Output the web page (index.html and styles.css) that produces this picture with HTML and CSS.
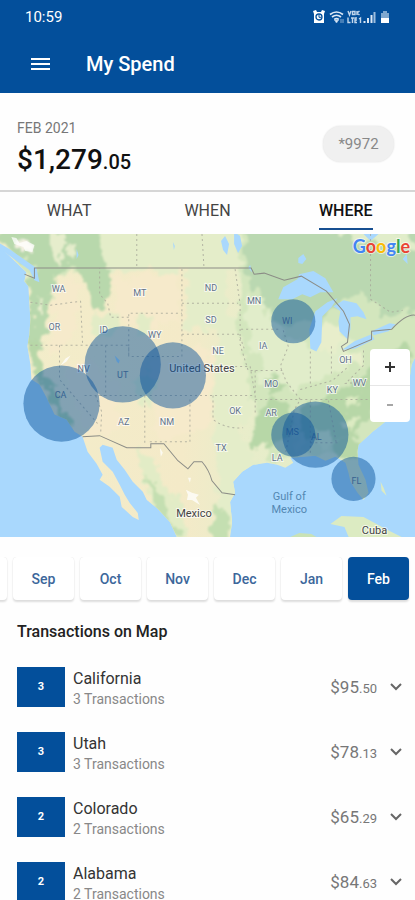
FILE: index.html
```html
<!DOCTYPE html>
<html lang="en">
<head>
<meta charset="utf-8">
<meta name="viewport" content="width=device-width, initial-scale=1">
<title>My Spend</title>
<link rel="stylesheet" href="styles.css">
</head>
<body>
<header class="top">
  <div class="status">
    <span>10:59</span>
    <svg class="status-icons" viewBox="0 0 80 16" width="80" height="16" aria-hidden="true">
      <path d="M1 2l3-1 1 2h4l1-2 3 1-1 3v9H2V5z" fill="#fff"/>
      <circle cx="7" cy="8" r="3" fill="#fff" stroke="#034f9b" stroke-width="1.3"/>
      <path d="M7 6v2.300h2" fill="none" stroke="#034f9b"/>
      <path d="M18 5.500q6.500-5 13 0M20 8q4.500-3.500 9 0M22.200 10.500q2.300-1.600 4.600 0" fill="none" stroke="#dce8f5" stroke-width="1.700"/>
      <path d="M24.500 14l-2-3h4zM29 10v4m2-4v4" fill="#dce8f5" stroke="#a9c5e2" stroke-width=".8"/>
      <g fill="none" stroke="#c3d7ec" stroke-width="1.400">
        <path d="M36 2l1.500 4L39 2M40.500 2.500h2.500v3h-2.500zM45 2v4m0-2l2.500-2M45 4l2.500 2"/>
        <path d="M36 8.500v5h2.500M39 9h3m-1.500 0v5M45 9h-2v4.500h2M43 11h2M47 10l1.500-1v5"/>
      </g>
      <path d="M51.500 12h2v2h-2zM55 9h2v5h-2zM58.500 6h2v8h-2z" fill="#dce8f5"/>
      <path d="M61.500 3h2v11h-2z" fill="#9dbddd"/>
      <path d="M69 4h2V2h4v2h2v6h-8z" fill="#7fa8d0"/>
      <path d="M69 9h8v5h-8z" fill="#fff"/>
    </svg>
  </div>
  <div class="bar">
    <button class="menu" type="button" aria-label="Menu">
      <svg viewBox="0 0 20 14" width="20" height="14"><path d="M0 2h19M0 7h19M0 12h19" stroke="#fff" stroke-width="2"/></svg>
    </button>
    <h1>My Spend</h1>
  </div>
</header>
<main>
  <section class="summary">
    <div>
      <p class="period">FEB 2021</p>
      <p class="total">$1,279<small>.05</small></p>
    </div>
    <button class="card" type="button">*9972</button>
  </section>
  <nav class="tabs">
    <a href="#what">WHAT</a>
    <a href="#when">WHEN</a>
    <a href="#where" class="current" aria-current="page">WHERE</a>
  </nav>
  <section class="map" aria-label="Spending map">
    <svg class="map-art" viewBox="0 0 415 302" preserveAspectRatio="xMidYMid slice">
      <defs>
        <filter id="rough" x="-5%" y="-5%" width="110%" height="110%">
          <feTurbulence type="fractalNoise" baseFrequency=".09" numOctaves="3" seed="4"/>
          <feDisplacementMap in="SourceGraphic" scale="20" xChannelSelector="R" yChannelSelector="G"/>
          <feGaussianBlur stdDeviation=".8"/>
        </filter>
        <linearGradient id="ground" x1="0" x2="1" y1="0" y2="0">
          <stop offset="0" stop-color="#f2edca"/>
          <stop offset=".44" stop-color="#f4eac8"/>
          <stop offset=".6" stop-color="#e8edca"/>
          <stop offset="1" stop-color="#dcebc5"/>
        </linearGradient>
        <clipPath id="land">
          <path d="M0 0H415V122L411 130L408 150L405 180L385 187L372 197L358 210L357 217L358 230L365 245L368 258L363 265L357 258L350 247L348 238L345 228L335 222L325 226L315 221L305 222L290 223L293 228L285 233L277 230L267 228L253 230L242 237L233 247L235 258L230 267L232 287L230 302H177L170 287L157 273L147 265L143 257L133 247L125 235L117 225L113 213L103 210L100 213L103 227L113 237L120 250L125 260L130 268L138 278L139 285L133 282L122 272L120 262L110 252L100 245L103 240L97 229L88 217L83 202L75 197L67 185L55 180L47 163L40 150L32 145L31 130L28 112L30 100L31 85L30 70L29 52L25 47L27 38L8 20L0 13Z"/>
        </clipPath>
      </defs>
      <rect width="415" height="302" fill="#a9d8fd"/>
      <g clip-path="url(#land)">
        <rect width="415" height="302" fill="url(#ground)"/>
        <g filter="url(#rough)">
          <path fill="#e4edc9" d="M95 -9H240V37H98zM186 35h40v60h-40zM215 70l30 20 15 60-20 60-25-5zM218 200l32 8 10 32-30 60-12-32z"/>
          <path fill="#d3e6bd" d="M0 -9H100L105 34L28 48zM240 -9L425 -9V190L340 215L270 225L252 160L238 90z"/>
          <path fill="#b8d8ac" d="M0 5L12 -9H98L105 22L112 50L104 72L96 76L80 34L60 36L54 45L53 68L46 100L42 118L30 130L30 45L38 35L14 18z"/>
          <path fill="#e6edcc" d="M52 -2l12 0 2 18-8 14-8-12zM70 8l5 2-2 14-4-4zM38 60l5 4-2 20-4-2z"/>
          <path fill="#bad8b1" d="M244 -9H425V75L388 82L360 60L340 62L318 90L300 82L283 96L256 58L246 38z"/>
          <path fill="#e1edca" d="M320 -9h55l30 8 20 16-22-2-25-2-30-8zM250 60l12 6 4 18 12 6 8 12-8 20-25-5-8-40zM263 105l20-2 25 8 22-10 22 4 8 22-30 15-32 12-38-5z"/>
          <path fill="#e8eecb" d="M318 92l14 0 10 10-6 18-20-8zM345 112l12 4 0 14-16-2z"/>
          <path fill="#b7d7a7" d="M298 175l38-15 30-24 38-25 10 10-22 38-30 30-10 15-32 3-32-5zM252 192l20-30 14 8 12 26-14 10-30 8zM264 146l12-6 10 12-14 10zM30 102l10 12 3 20 13 25 18 32-8-2-15-28-18-28zM330 210l28-8 6 20-20 4z"/>
          <path fill="#dcebc2" d="M294 172l8-5 0 48-8 5zM318 195l8 3 4 15-10 1zM340 190l15-8-2 15zM345 165l14-8-2 10-10 8z"/>
          <path fill="#f6eacb" d="M58 46l18-2 4 26-10 36-20 15 3-36zM116 45l62-8v50l-40 8-25-16zM62 130l30-5 28 30-2 42-30 5-16-38zM150 130l50-20 14 12-5 70-50 16z"/>
          <path fill="#e2ecc6" d="M95 80l20 0 4 14-10 10-16 0zM135 85l12-6 6 8-4 20-10-6zM133 150l15-18 8 18-10 25zM137 215l15 10 13 25 15 16 7 38h-15l-25-42z"/>
          <path fill="#c4dfb1" d="M143 240l12 10 14 30 12 21h-8l-16-26zM215 270l13 12-2 24h-14z"/>
          <path fill="#f5f1e4" d="M15 8l9 0 12 5-4 8-9-5z"/>
        </g>
      </g>
      <path fill="#dcebc2" d="M330 289l11-8 22 1 26 14 16 8h-56l-5-12zM380 247l3 6 3 8-5-5z"/>
      <path fill="#c9e2b6" d="M290 302l9-4 12 1 5 3z"/>
      <g fill="#a9d8fd">
        <path d="M0 9l10 6 27 19 3 14-5-2-5-10L5 18 0 16zM278 65l5-12 14-8 2-5 14-3 12 7 8 14-13 0-10 5-8-3-10 5zM309 95l6-18 12-9 10-4-6 9-9 9-1 26-5 9-6-3zM333 72l10-6 13 3 7 9 3 7-9-3-7 1v12l-3 10-8-8-1-10 2-10zM342 115l12-8 17-7 3 5-19 9-10 1zM371 97l18-8 6 1-7 7-15 4zM221 7l4-5 4 8-2 11-4-5zM234 -2l6 4 2 10-4 7-4-9zM298 24l5-4 3 5-4 5-4-1zM363 0h15l-8 7zM402 25l4-5 1 10zM252 38l-2-7-2 3zM173 8l2 4-1 4zM115 121l5 5-1 3-2-2zM77 15l2 6-2 4z"/>
      </g>
      <g fill="#fff" opacity=".75"><path d="M12 3l5 1 3 5 7-2 8 4-2 7-7-1-2-4-9-3zM186 255l6 3 7 2-3 3 4 7-8-5-5 0 1-5zM71 121l-4 6-6 4 5-7zM188 243l3 0-1 5zM160 213l3 5-2 4z"/></g>
      <g class="states">
        <path d="M137 0v33M202 0l2 34M182 35v87h-53V79h53M182 69h56M182 100h57l5 14M129 83h-18l-3-14-8-9V34M31 68l20 3 30-4 2 43M31 111h98v10M60 111v34l38 44M106 111v50H96l6 16-1 22M85 161h170M145 161v50M213 161v24q14 10 30 8M190 165v42h-42M205 132h45l5 29M235 35l5 35v40l8 26h34M241 95h38M255 136v45M283 96l5 16-8 20 6 15 14 18-6 10-5 25-4 20M310 117v33M300 155l32-9 15-13M331 112v30M363 116v15l-18 18 60-5M255 165h135M310 166v55M328 166l8 43M310 208h29M370 0v65l20 13 12-2"/>
      </g>
      <path class="border" d="M25 40l10 4v-10h216l3 6 10-1 20 7 17-4 25 15 17 20 6 13-2 18-6 4 2 5 28-12v-8l20-2q15-16 24-14M83 202l17-1 27 12h24v-4h13l14 17 10 8 6-7h8q7 8 10 19l10 12 13 2"/>
      <g class="state-names">
        <text x="59" y="58">WA</text><text x="55" y="96">OR</text><text x="140" y="62">MT</text><text x="211" y="57">ND</text><text x="211" y="89">SD</text><text x="155" y="104">WY</text><text x="104" y="99">ID</text><text x="84" y="138">NV</text><text x="254" y="70">MN</text><text x="263" y="115">IA</text><text x="218" y="120">NE</text><text x="345" y="129">OH</text><text x="271" y="152">MO</text><text x="332" y="158">KY</text><text x="359" y="151">WV</text><text x="124" y="190">AZ</text><text x="167" y="190">NM</text><text x="235" y="179">OK</text><text x="271" y="181">AR</text><text x="221" y="216">TX</text><text x="277" y="226">LA</text>
        <g class="covered"><text x="61" y="163">CA</text><text x="123" y="144">UT</text><text x="292" y="200">MS</text><text x="316" y="205">AL</text><text x="356" y="249">FL</text><text x="287" y="90">WI</text></g>
      </g>
      <g class="places"><text x="202" y="138">United States</text><text x="194" y="282">Mexico</text><text x="374" y="299">Cuba</text></g>
      <g class="sea"><text x="289" y="265">Gulf of</text><text x="289" y="278">Mexico</text></g>
      <g class="spend">
        <circle cx="62" cy="169" r="38"/><circle cx="123" cy="130" r="38"/><circle cx="173" cy="141" r="33"/><circle cx="293" cy="87" r="22"/><circle cx="293" cy="200" r="22"/><circle cx="315" cy="200" r="33"/><circle cx="353" cy="244" r="22"/>
      </g>
    </svg>
    <div class="google" aria-label="Google"><span class="b">G</span><span class="r">o</span><span class="y">o</span><span class="b">g</span><span class="g">l</span><span class="r">e</span></div>
    <div class="zoom">
      <button type="button" aria-label="Zoom in"><svg viewBox="0 0 12 12" width="12" height="12"><path d="M6 1v10M1 6h10" stroke="#333" stroke-width="2"/></svg></button>
      <button type="button" aria-label="Zoom out"><svg viewBox="0 0 12 12" width="12" height="12"><path d="M3 7h6" stroke="#888" stroke-width="1.500"/></svg></button>
    </div>
  </section>
  <div class="months">
    <button type="button" aria-label="August"></button>
    <button type="button">Sep</button>
    <button type="button">Oct</button>
    <button type="button">Nov</button>
    <button type="button">Dec</button>
    <button type="button">Jan</button>
    <button type="button" class="selected" aria-pressed="true">Feb</button>
  </div>
  <section class="transactions">
    <h2>Transactions on Map</h2>
    <ul>
      <li><span class="count">3</span><div class="where"><h3>California</h3><p>3 Transactions</p></div><span class="amount">$95<small>.50</small></span><button type="button" aria-label="Show California"><svg viewBox="0 0 12 8" width="12" height="8"><path d="M1 1l5 5 5-5"/></svg></button></li>
      <li><span class="count">3</span><div class="where"><h3>Utah</h3><p>3 Transactions</p></div><span class="amount">$78<small>.13</small></span><button type="button" aria-label="Show Utah"><svg viewBox="0 0 12 8" width="12" height="8"><path d="M1 1l5 5 5-5"/></svg></button></li>
      <li><span class="count">2</span><div class="where"><h3>Colorado</h3><p>2 Transactions</p></div><span class="amount">$65<small>.29</small></span><button type="button" aria-label="Show Colorado"><svg viewBox="0 0 12 8" width="12" height="8"><path d="M1 1l5 5 5-5"/></svg></button></li>
      <li><span class="count">2</span><div class="where"><h3>Alabama</h3><p>2 Transactions</p></div><span class="amount">$84<small>.63</small></span><button type="button" aria-label="Show Alabama"><svg viewBox="0 0 12 8" width="12" height="8"><path d="M1 1l5 5 5-5"/></svg></button></li>
    </ul>
  </section>
</main>
</body>
</html>
```
FILE: styles.css
```css
* { box-sizing: border-box; }
html { height: 100%; overflow: hidden; }
body {
  margin: 0;
  height: 100%;
  overflow: hidden;
  background: #fefefe;
  color: #222;
  font-family: Roboto, "Liberation Sans", sans-serif;
}
h1, h2, h3, p, ul { margin: 0; padding: 0; font-weight: 400; }
ul { list-style: none; }
button { border: 0; padding: 0; background: none; font: inherit; }
button svg { display: block; margin: auto; }

.top { background: #034f9b; color: #fff; }
.status {
  display: flex;
  align-items: center;
  justify-content: space-between;
  height: 34px;
  padding: 0 23px 0 25px;
  font-size: 15px;
}
.bar { display: flex; align-items: center; height: 59px; padding: 0 31px; gap: 35px; }
.bar h1 { font-size: 20px; font-weight: 500; }

.summary {
  display: flex;
  align-items: flex-start;
  justify-content: space-between;
  height: 99px;
  padding: 25px 21px 0 17px;
  border-bottom: 2px solid #d6d6d6;
}
.period { font-size: 14px; line-height: 20px; color: #777; }
.total { font-size: 28px; line-height: 44px; font-weight: 500; color: #111; }
.total small { font-size: 20px; }
.card {
  width: 71px;
  height: 36px;
  margin-top: 8px;
  border-radius: 18px;
  background: #f0f0f0;
  box-shadow: 0 0 2px #ddd;
  color: #888;
  font-size: 15px;
}

.tabs { display: grid; grid-template-columns: repeat(3, 1fr); justify-items: center; height: 42px; }
.tabs a { height: 38px; line-height: 38px; font-size: 16px; color: #444; text-decoration: none; }
.tabs .current { border-bottom: 2px solid #174f91; color: #111; font-weight: 500; }

.map { position: relative; height: 303px; }
.map-art { display: block; width: 100%; height: 100%; }
.states { fill: none; stroke: #a6a698; stroke-width: 1; stroke-dasharray: 2 3; opacity: .8; }
.border { fill: none; stroke: #8b8c86; stroke-width: 1; }
.map text { text-anchor: middle; paint-order: stroke; stroke: #fffa; stroke-width: 2; }
.state-names { font-size: 9px; fill: #61728a; }
.places { font-size: 11px; fill: #444; }
.sea { font-size: 11px; fill: #5387b2; }
.map .sea text, .map .covered text { stroke: none; }
.spend { fill: #08529a; fill-opacity: .48; }
.google {
  position: absolute;
  top: 0;
  right: 5px;
  font: 700 18px/24px Lato, sans-serif;
  -webkit-text-stroke: 2px #fff9;
  paint-order: stroke;
}
.google .b { color: #4285f4; }
.google .r { color: #ea4335; }
.google .y { color: #fbbc05; }
.google .g { color: #34a853; }
.zoom {
  position: absolute;
  top: 115px;
  right: 5px;
  width: 40px;
  border-radius: 4px;
  background: #fff;
}
.zoom button { display: block; width: 100%; height: 36px; }
.zoom button + button { border-top: 1px solid #e6e6e6; height: 37px; }

.months { display: flex; justify-content: flex-end; gap: 6px; margin-top: 20px; padding: 0 6px 4px 0; overflow: hidden; }
.months button {
  flex: 0 0 61px;
  height: 43px;
  border-radius: 4px;
  background: #fff;
  box-shadow: 0 2px 2px #ddd, 0 0 1px #ddd;
  color: #3c679b;
  font-size: 14px;
  font-weight: 500;
}
.months .selected { background: #034f9b; color: #fff; }

.transactions { padding: 16px 13px 0 17px; }
.transactions h2 { font-size: 16px; line-height: 24px; font-weight: 500; margin-bottom: 19px; }
.transactions li { display: flex; align-items: center; height: 65px; padding-bottom: 17px; }
.count {
  flex: 0 0 48px;
  height: 40px;
  background: #034f9b;
  color: #fff;
  font-size: 11px;
  font-weight: 700;
  line-height: 40px;
  text-align: center;
}
.where { flex: 1; padding: 2px 0 0 8px; }
.where h3 { font-size: 16px; line-height: 21px; color: #333; }
.where p { font-size: 14px; line-height: 20px; color: #888; }
.amount { font-size: 17px; color: #777; }
.amount small { font-size: 13px; }
.transactions li button { margin-left: 13px; }
.transactions li path { fill: none; stroke: #666; stroke-width: 2; }
```
